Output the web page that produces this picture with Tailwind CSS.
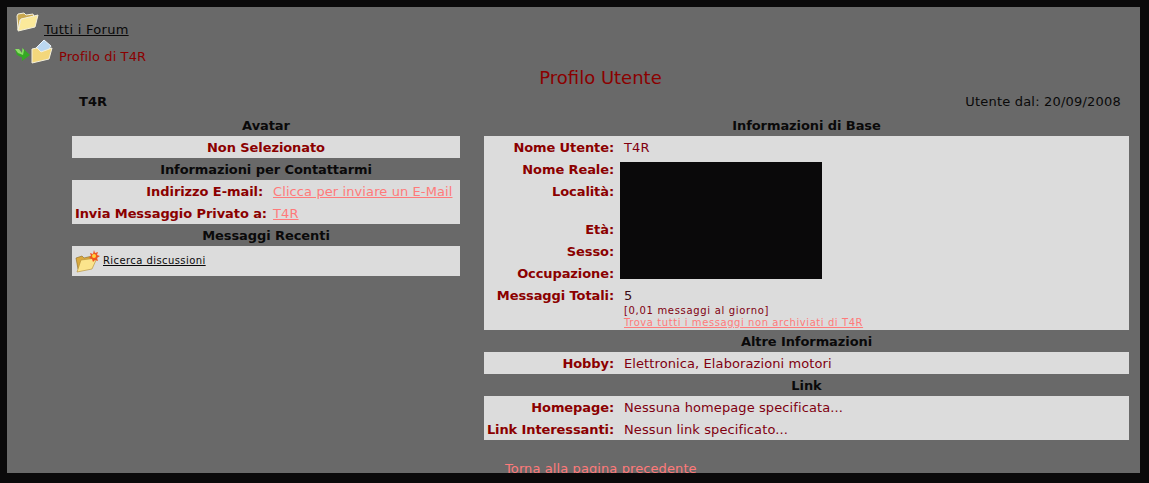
<!DOCTYPE html>
<html lang="it">
<head>
<meta charset="UTF-8">
<title>Profilo Utente</title>
<script src="https://cdn.jsdelivr.net/npm/@tailwindcss/browser@4"></script>
</head>
<body class="bg-[#0a090a] h-[483px] overflow-hidden font-['DejaVu_Sans',sans-serif] text-[13px] leading-[24px] tracking-[0.1px] text-[#0a090a]">
<div class="relative mx-[7px] mt-[7px] h-[466px] w-[1133px] bg-[#696969] overflow-hidden">
  <!-- breadcrumb -->
  <div class="flex items-end h-[28px] pl-[8px] pt-[4px]">
    <svg width="24" height="22" viewBox="0 0 24 22" class="mb-[2px]">
      <path d="M2 5l1-2 6-1 2 2 7-1 1 3L5 9 3 19z" fill="#c9a850" stroke="#f4f0dc"/>
      <path d="M3 20L6 8l17-4-3 12z" fill="#fbe99a" stroke="#f4f0dc"/>
    </svg>
    <a class="ml-[5px] underline leading-[17px] -mb-[3px] tracking-[0.27px]">Tutti i Forum</a>
  </div>
  <div class="flex items-end h-[29px] pl-[7px]">
    <svg width="17" height="15" viewBox="0 0 17 15" class="mb-[2px]">
      <path d="M1 2L5 2L8 6L8.500 1L16 8L8 14L8 10.500L3 8z" fill="#35a824"/>
      <path d="M1 2L5 2L8 6L8.500 1L10 3L9 8L4 6z" fill="#8fdc6a"/>
    </svg>
    <svg width="23" height="25" viewBox="0 0 23 25" class="-ml-[1px]">
      <path d="M6 9l8-8 7 6-6 9z" fill="#bcd8f0" stroke="#eef6fc"/>
      <path d="M2 10l5-1 4 4 11-4-3 11-17 4z" fill="#f3d77c" stroke="#f4f0dc"/>
    </svg>
    <span class="ml-[6px] text-[#8b0000] leading-[17px] -mb-[1px]">Profilo di T4R</span>
  </div>
  <h1 class="pl-[54px] text-center text-[#8b0000] text-[18px] leading-[24px] mt-[2px] font-normal tracking-normal">Profilo Utente</h1>
  <div class="flex justify-between pl-[72px] pr-[19px] h-[22px] -mb-[1px]">
    <b>T4R</b>
    <span class="tracking-[0.2px]">Utente dal: 20/09/2008</span>
  </div>

  <div class="flex gap-[24px] pl-[65px] pr-[11px] mt-[3px]">
    <!-- left column -->
    <div class="w-[388px] shrink-0">
      <h2 class="h-[22px] text-center font-bold tracking-[-0.08px]">Avatar</h2>
      <div class="h-[22px] bg-[#dcdcdc] text-center font-bold tracking-[-0.08px] text-[#8b0000]">Non Selezionato</div>
      <h2 class="h-[22px] text-center font-bold tracking-[-0.08px]">Informazioni per Contattarmi</h2>
      <div class="bg-[#dcdcdc]">
        <div class="flex h-[22px]">
          <b class="w-[195px] pr-[4px] text-right tracking-[-0.08px] text-[#8b0000]">Indirizzo E-mail:</b>
          <a class="ml-[6px] underline text-[#ff7a7a]">Clicca per inviare un E-Mail</a>
        </div>
        <div class="flex h-[22px]">
          <b class="w-[195px] text-right tracking-[-0.08px] text-[#8b0000] whitespace-nowrap">Invia Messaggio Privato a:</b>
          <a class="ml-[6px] underline text-[#ff7a7a]">T4R</a>
        </div>
      </div>
      <h2 class="h-[22px] text-center font-bold tracking-[-0.08px]">Messaggi Recenti</h2>
      <div class="flex items-center h-[30px] bg-[#dcdcdc] pl-[3px]">
        <svg width="25" height="24" viewBox="0 0 25 24">
          <path d="M1 9l6-2 2 2 8-2-1 5-13 8z" fill="#d9a93e" stroke="#8a6a20" stroke-width=".6"/>
          <path d="M2 23l4-12 16-2-5 11z" fill="#fbe48c" stroke="#b08a30" stroke-width=".6"/>
          <path d="M19 1l1 3 3-1-1 3 3 1-3 2 1 3-3-1-2 2-1-3-3-1 2-2-1-3 3 1z" fill="#f0541e"/>
          <circle cx="19" cy="7" r="2" fill="#ffd23c"/>
        </svg>
        <a class="ml-[3px] underline text-[10px] tracking-[0.42px]">Ricerca discussioni</a>
      </div>
    </div>

    <!-- right column -->
    <div class="flex-1">
      <h2 class="h-[22px] text-center font-bold tracking-[-0.08px]">Informazioni di Base</h2>
      <div class="relative bg-[#dcdcdc] h-[194px]">
        <div class="flex h-[22px]"><b class="w-[130px] text-right tracking-[-0.1px] text-[#8b0000]">Nome Utente:</b><span class="ml-[10px] text-[#800010]">T4R</span></div>
        <div class="h-[22px] w-[130px] text-right font-bold tracking-[-0.1px] text-[#8b0000]">Nome Reale:</div>
        <div class="h-[38px] w-[130px] text-right font-bold tracking-[-0.1px] text-[#8b0000]">Località:</div>
        <div class="h-[22px] w-[130px] text-right font-bold tracking-[-0.1px] text-[#8b0000]">Età:</div>
        <div class="h-[22px] w-[130px] text-right font-bold tracking-[-0.1px] text-[#8b0000]">Sesso:</div>
        <div class="h-[22px] w-[130px] text-right font-bold tracking-[-0.1px] text-[#8b0000]">Occupazione:</div>
        <div class="flex">
          <b class="w-[130px] text-right tracking-[-0.1px] text-[#8b0000]">Messaggi Totali:</b>
          <div class="ml-[10px] text-[#800010]">
            <div class="h-[22px] text-[#3a0a14]">5</div>
            <div class="text-[10px] leading-[12px] -mt-[1px] tracking-[0.68px]">[0,01 messaggi al giorno]</div>
            <a class="block text-[10px] leading-[12px] underline tracking-[0.57px] text-[#ff7a7a]">Trova tutti i messaggi non archiviati di T4R</a>
          </div>
        </div>
        <div class="absolute left-[136px] top-[26px] w-[202px] h-[117px] bg-[#0a090a]"></div>
      </div>
      <h2 class="h-[22px] text-center font-bold tracking-[-0.08px]">Altre Informazioni</h2>
      <div class="flex h-[22px] bg-[#dcdcdc]"><b class="w-[130px] text-right tracking-[-0.1px] text-[#8b0000]">Hobby:</b><span class="ml-[10px] text-[#800010]">Elettronica, Elaborazioni motori</span></div>
      <h2 class="h-[22px] text-center font-bold tracking-[-0.08px]">Link</h2>
      <div class="bg-[#dcdcdc]">
        <div class="flex h-[22px]"><b class="w-[130px] text-right tracking-[-0.1px] text-[#8b0000]">Homepage:</b><span class="ml-[10px] text-[#800010]">Nessuna homepage specificata...</span></div>
        <div class="flex h-[22px]"><b class="w-[130px] text-right tracking-[-0.1px] text-[#8b0000] whitespace-nowrap">Link Interessanti:</b><span class="ml-[10px] text-[#800010]">Nessun link specificato...</span></div>
      </div>
    </div>
  </div>
  <div class="pl-[498px] mt-[17px] text-[#ff7a7a]">Torna alla pagina precedente</div>
</div>
</body>
</html>
